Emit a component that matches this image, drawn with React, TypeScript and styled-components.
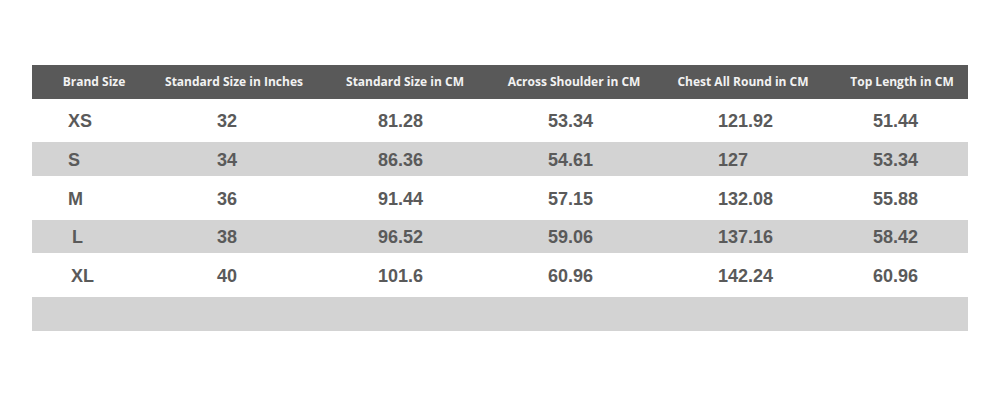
import React from "react";
import styled, { createGlobalStyle } from "styled-components";

const Global = createGlobalStyle`
  html, body { margin: 0; padding: 0; background: #ffffff; }
  body { width: 1000px; height: 400px; overflow: hidden; }
`;

const Page = styled.div`
  padding: 65px 32px 0 32px;
`;

const Table = styled.div`
  display: grid;
  grid-template-columns: 124px 156px 186px 152px 186px 132px;
  width: 936px;
`;

const HeaderCell = styled.div`
  background: #595959;
  height: 34px;
  display: flex;
  align-items: center;
  justify-content: center;
  font-family: "Open Sans", "Noto Sans", sans-serif;
  font-weight: 700;
  font-size: 12px;
  color: #f2f2f2;
  white-space: nowrap;
  padding-bottom: 2px;
  box-sizing: border-box;
`;

const Cell = styled.div<{ $shade: boolean; $h: number; $indent: number }>`
  background: ${(p) => (p.$shade ? "#d3d3d3" : "#ffffff")};
  height: ${(p) => p.$h}px;
  display: flex;
  align-items: center;
  padding-left: ${(p) => p.$indent}px;
  padding-top: 2px;
  box-sizing: border-box;
  font-family: "Liberation Sans", Arial, sans-serif;
  font-weight: 700;
  font-size: 18px;
  color: #5a5a5a;
  white-space: nowrap;
`;

const headers = [
  "Brand Size",
  "Standard Size in Inches",
  "Standard Size in CM",
  "Across Shoulder in CM",
  "Chest All Round in CM",
  "Top Length in CM",
];

const indents = [36, 61, 66, 50, 68, 37];

const rows: { values: string[]; h: number }[] = [
  { values: ["XS", "32", "81.28", "53.34", "121.92", "51.44"], h: 43 },
  { values: ["S", "34", "86.36", "54.61", "127", "53.34"], h: 34 },
  { values: ["M", "36", "91.44", "57.15", "132.08", "55.88"], h: 44 },
  { values: ["L", "38", "96.52", "59.06", "137.16", "58.42"], h: 33 },
  { values: ["XL", "40", "101.6", "60.96", "142.24", "60.96"], h: 44 },
  { values: ["", "", "", "", "", ""], h: 34 },
];

export default function App() {
  return (
    <>
      <Global />
      <Page>
        <Table>
          {headers.map((h) => (
            <HeaderCell key={h}>{h}</HeaderCell>
          ))}
          {rows.map((r, ri) =>
            r.values.map((v, ci) => (
              <Cell
                key={`${ri}-${ci}`}
                $shade={ri % 2 === 1}
                $h={r.h}
                $indent={indents[ci] + (ri === 3 && ci === 0 ? 4 : ri === 4 && ci === 0 ? 3 : 0)}
              >
                {v}
              </Cell>
            ))
          )}
        </Table>
      </Page>
    </>
  );
}
